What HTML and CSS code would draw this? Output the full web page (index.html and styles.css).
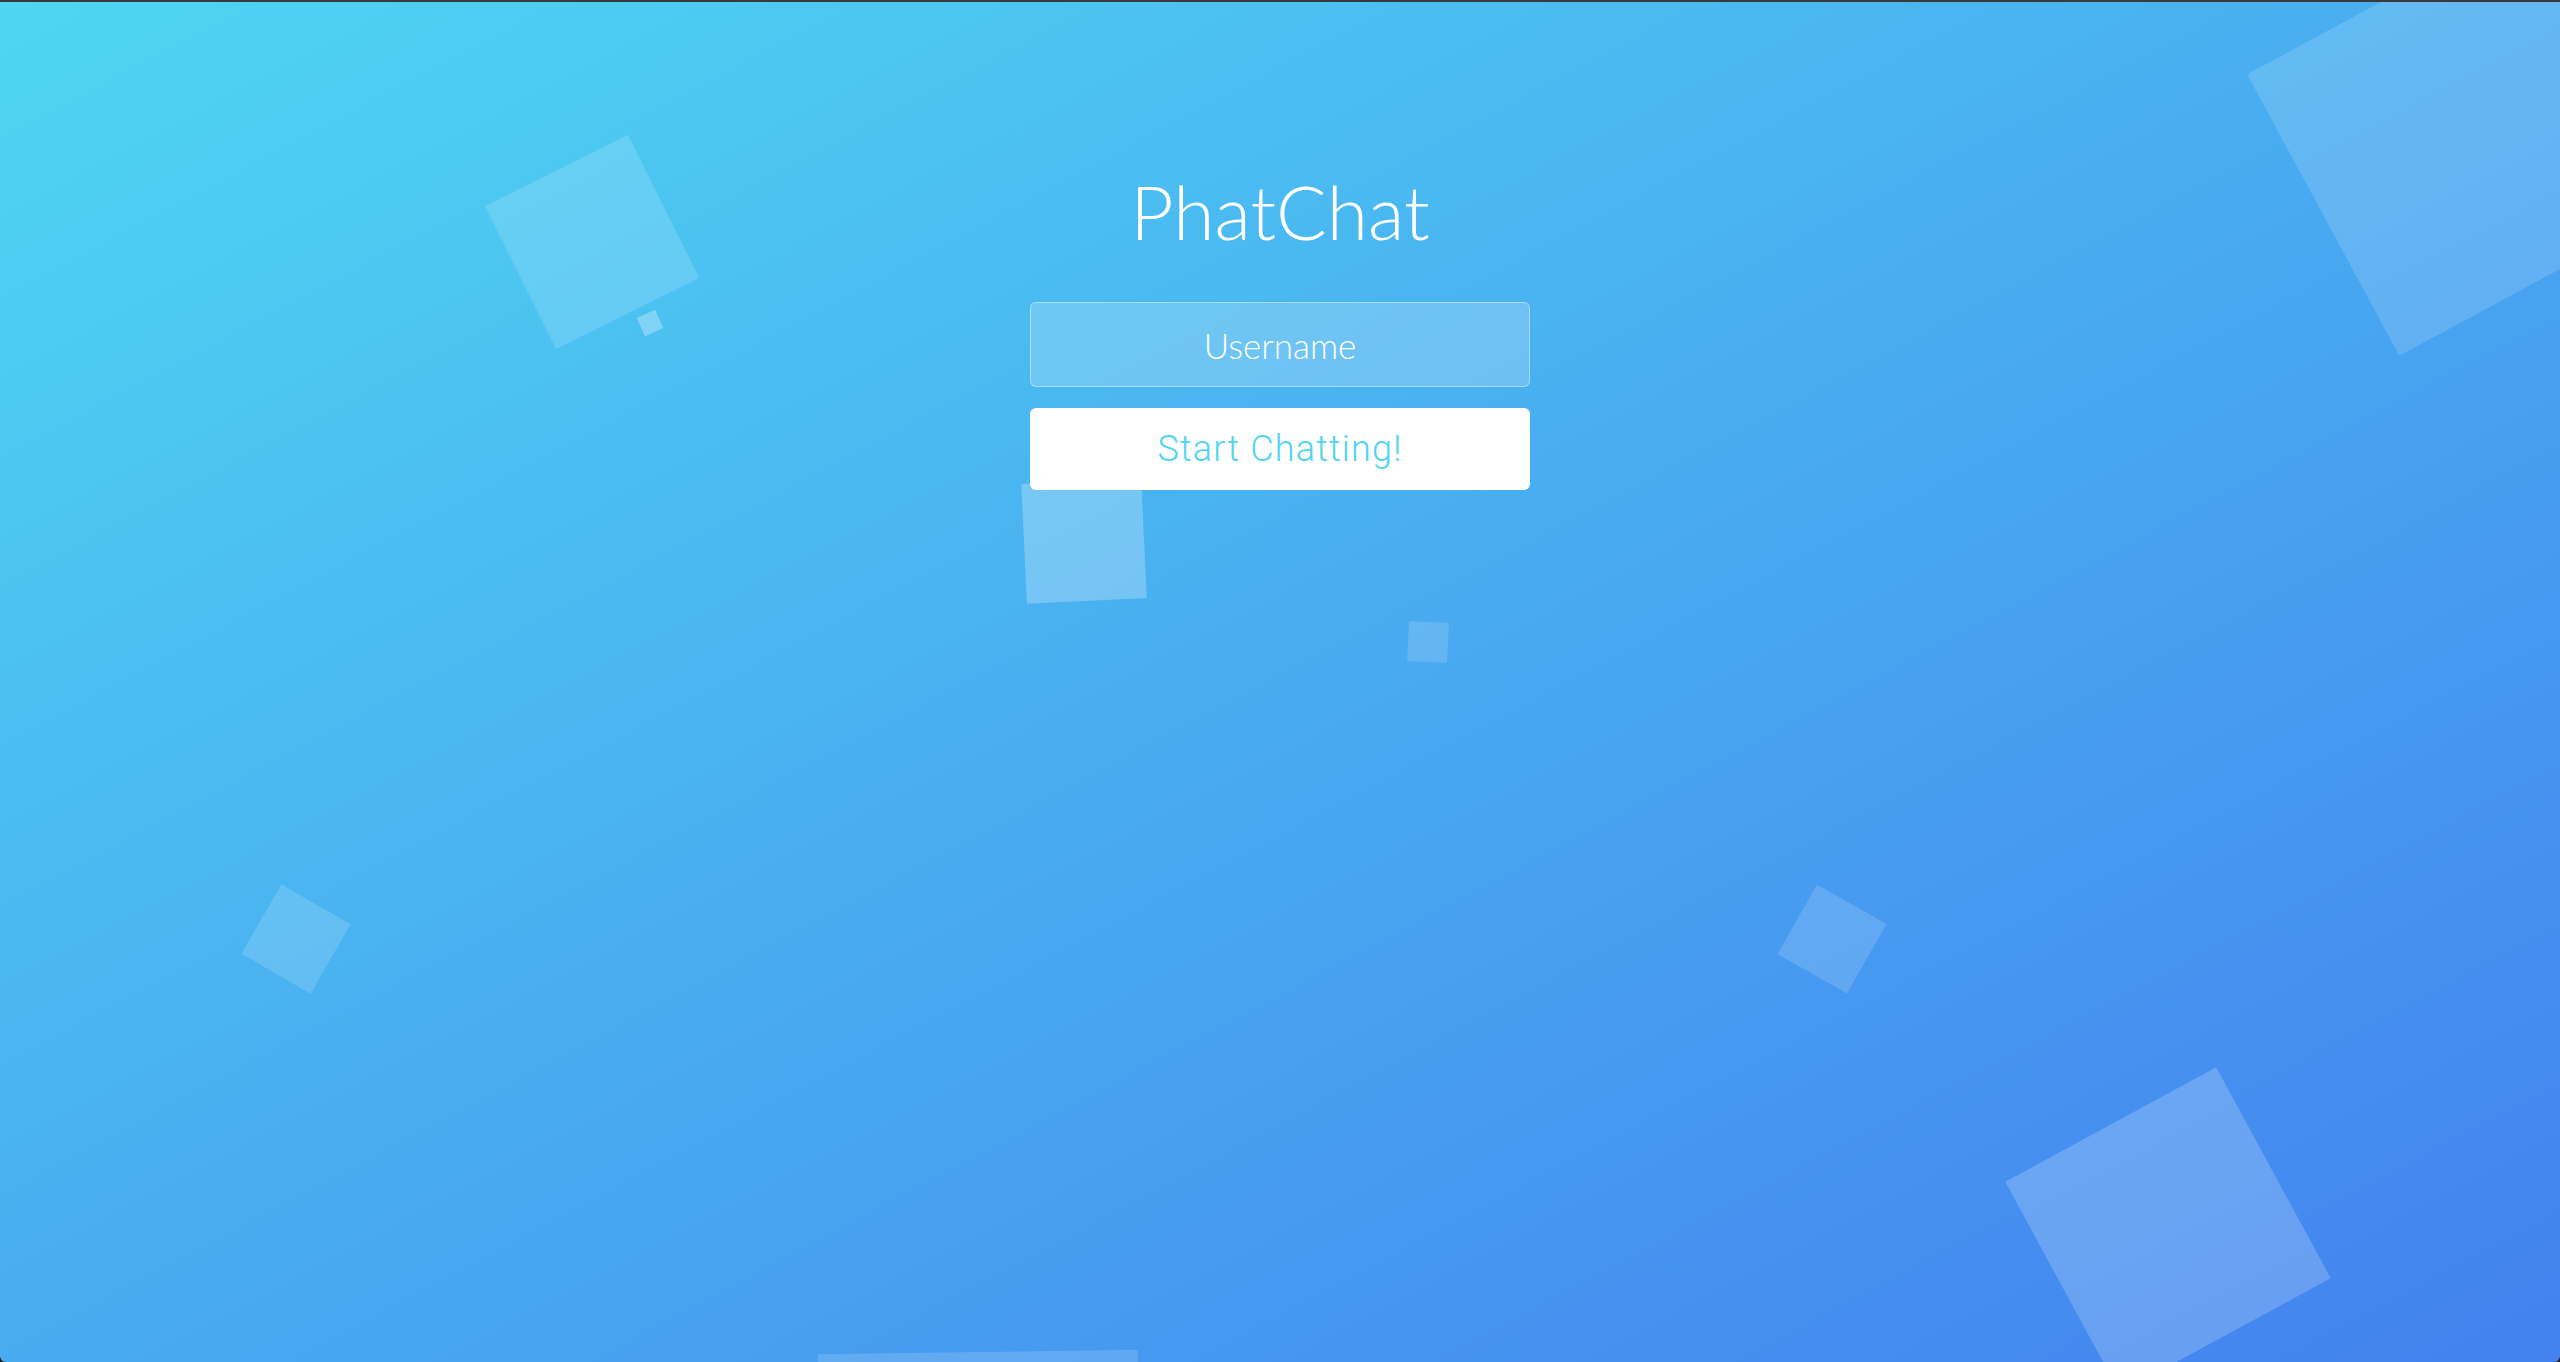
FILE: index.html
```html
<!DOCTYPE html>
<html lang="en">
<head>
<meta charset="utf-8">
<title>PhatChat</title>
<link rel="stylesheet" href="styles.css">
</head>
<body>
<div class="app">
  <ul class="bubbles">
    <li class="bubble b1"></li>
    <li class="bubble b2"></li>
    <li class="bubble b3"></li>
    <li class="bubble b4"></li>
    <li class="bubble b5"></li>
    <li class="bubble b6"></li>
    <li class="bubble b7"></li>
    <li class="bubble b8"></li>
    <li class="bubble b9"></li>
  </ul>
  <main class="login">
    <h1 class="title">PhatChat</h1>
    <form class="form">
      <input class="field" type="text" placeholder="Username">
      <button class="start" type="button">Start Chatting!</button>
    </form>
  </main>
</div>
</body>
</html>
```
FILE: styles.css
```css
html, body {
  margin: 0;
  padding: 0;
  background: #1f1f1f;
}

.app {
  position: relative;
  box-sizing: border-box;
  width: 2560px;
  height: 1362px;
  overflow: hidden;
  border-top: 2px solid #3a3a3a;
  border-radius: 0 0 6px 6px;
  background: linear-gradient(to bottom right, #4ed6f2 0%, #4381ef 100%);
  font-family: "Lato", "Source Sans Pro", "Open Sans", sans-serif;
}

.bubbles {
  position: absolute;
  inset: 0;
  margin: 0;
  padding: 0;
  list-style: none;
  z-index: 0;
}

.bubble {
  position: absolute;
  background-color: rgba(255, 255, 255, 0.15);
}

.b1 { left: 512px;  top: 160px;  width: 160px; height: 160px; transform: rotate(-26.5deg); }
.b2 { left: 640px;  top: 311px;  width: 20px;  height: 20px;  transform: rotate(-24deg); background-color: rgba(255, 255, 255, 0.3); }
.b3 { left: 2304px; top: -23px;  width: 320px; height: 320px; transform: rotate(-28.4deg); }
.b4 { left: 2048px; top: 1108px; width: 240px; height: 240px; transform: rotate(-28.5deg); background-color: rgba(255, 255, 255, 0.2); }
.b5 { left: 256px;  top: 897px;  width: 80px;  height: 80px;  transform: rotate(30deg); }
.b6 { left: 1024px; top: 479px;  width: 120px; height: 120px; transform: rotate(-2.7deg); background-color: rgba(255, 255, 255, 0.25); }
.b7 { left: 1408px; top: 620px;  width: 40px;  height: 40px;  transform: rotate(2.4deg); }
.b8 { left: 820px;  top: 1350px; width: 320px; height: 320px; transform: rotate(-0.84deg); }
.b9 { left: 1792px; top: 897px;  width: 80px;  height: 80px;  transform: rotate(29.5deg); }

.login {
  position: relative;
  z-index: 1;
  display: flex;
  flex-direction: column;
  align-items: center;
  padding-top: 169px;
}

.title {
  margin: 0;
  font-size: 75px;
  line-height: 80px;
  font-weight: 300;
  color: #ffffff;
}

.form {
  display: flex;
  flex-direction: column;
  gap: 21px;
  margin-top: 51px;
}

.field {
  box-sizing: border-box;
  width: 500px;
  height: 85px;
  margin: 0;
  padding: 0 30px;
  border: 1px solid rgba(255, 255, 255, 0.4);
  border-radius: 6px;
  background-color: rgba(255, 255, 255, 0.2);
  font-family: inherit;
  font-size: 35px;
  font-weight: 300;
  color: #ffffff;
  text-align: center;
  outline: none;
}

.field::placeholder {
  color: #ffffff;
  opacity: 1;
}

.start {
  box-sizing: border-box;
  width: 500px;
  height: 82px;
  margin: 0;
  padding: 0 30px;
  border: 0;
  border-radius: 6px;
  background-color: #ffffff;
  font-family: "Roboto", "Lato", sans-serif;
  font-size: 36px;
  font-weight: 300;
  letter-spacing: 1.2px;
  color: #50d4f2;
  cursor: pointer;
}
```
